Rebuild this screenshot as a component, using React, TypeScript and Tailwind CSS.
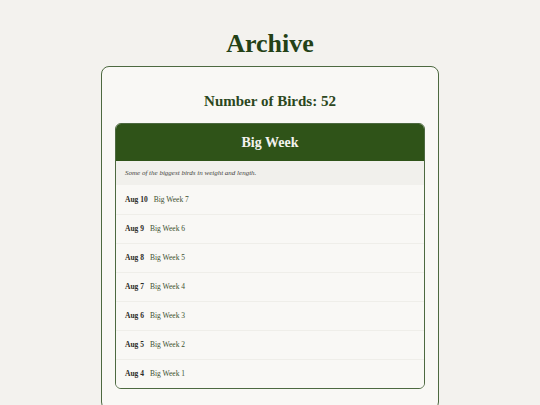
import React from 'react';

const entries = [
  { date: 'Aug 10', title: 'Big Week 7' },
  { date: 'Aug 9', title: 'Big Week 6' },
  { date: 'Aug 8', title: 'Big Week 5' },
  { date: 'Aug 7', title: 'Big Week 4' },
  { date: 'Aug 6', title: 'Big Week 3' },
  { date: 'Aug 5', title: 'Big Week 2' },
  { date: 'Aug 4', title: 'Big Week 1' },
];

const App: React.FC = () => {
  return (
    <div className="min-h-screen bg-[#f3f2ee] pt-[27px] font-['Liberation_Serif',serif]">
      <h1 className="text-center text-[26px] leading-[34px] font-bold text-[#234116]">
        Archive
      </h1>

      <div className="mx-auto mt-[5px] w-[338px] rounded-[8px] border border-[#4d6940] bg-[#f9f8f5] px-[13px] pt-[23px] pb-[20px]">
        <h2 className="text-center text-[15px] leading-[22px] font-bold text-[#2c4720]">
          Number of Birds: 52
        </h2>

        <div className="mt-[11px] overflow-hidden rounded-[6px] border border-[#4d6940]">
          <div className="flex h-[37px] items-center justify-center bg-[#2f5318]">
            <span className="text-[14px] font-bold text-[#f3f2ee]">Big Week</span>
          </div>

          <div className="flex h-[24px] items-center bg-[#f1f0ec] px-[9px]">
            <p className="text-[7px] italic text-[#45453f]">
              Some of the biggest birds in weight and length.
            </p>
          </div>

          <ul className="bg-[#f9f8f5]">
            {entries.map((entry, i) => (
              <li
                key={entry.title}
                className={`flex h-[29px] items-center gap-[6px] px-[9px] text-[7.5px] ${
                  i > 0 ? 'border-t border-[#efeee9]' : ''
                }`}
              >
                <span className="font-bold text-[#2b2b26]">{entry.date}</span>
                <span className="text-[#3d5231]">{entry.title}</span>
              </li>
            ))}
          </ul>
        </div>
      </div>
    </div>
  );
};

export default App;
